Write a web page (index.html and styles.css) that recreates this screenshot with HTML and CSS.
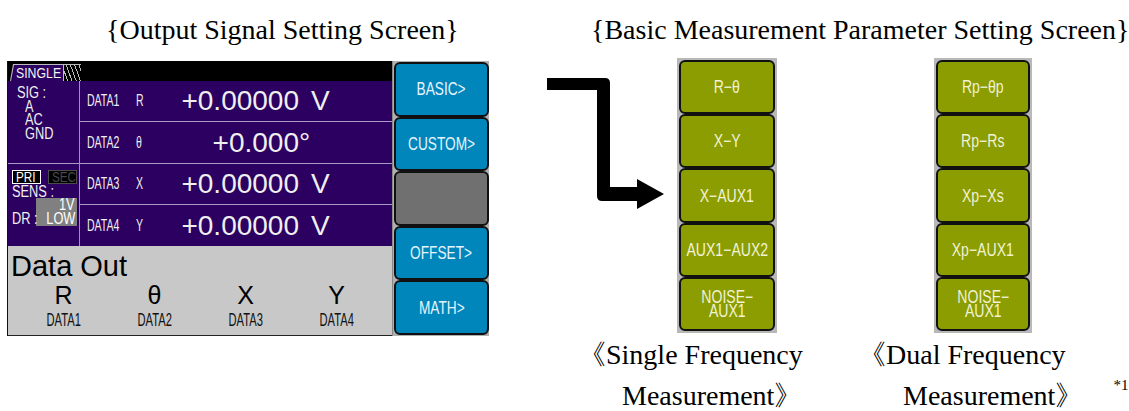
FILE: index.html
```html
<!DOCTYPE html>
<html lang="en">
<head>
    <meta charset="UTF-8">
    <meta name="viewport" content="width=device-width, initial-scale=1.0">
    <title>Output Signal Setting Screen</title>
    <link rel="stylesheet" href="styles.css">
</head>
<body>
<div class="page">
    <section class="fig fig-left">
        <h2>{Output Signal Setting Screen}</h2>
        <div class="screen">
            <div class="main">
                <div class="topbar">
                    <div class="tab"><span class="tab-label"><span class="t">SINGLE</span></span><i class="hatch"></i></div>
                </div>
                <div class="mid">
                    <div class="status">
                        <div class="sig">
                            <div><span class="t">SIG :</span></div>
                            <div class="ind"><span class="t">A</span></div>
                            <div class="ind"><span class="t">AC</span></div>
                            <div class="ind"><span class="t">GND</span></div>
                        </div>
                        <div class="sens">
                            <div class="prisec"><span class="pri"><span class="t">PRI</span></span><span class="sec"><span class="t">SEC</span></span></div>
                            <div><span class="t">SENS :</span></div>
                            <div class="box"><span class="t">1V</span></div>
                            <div class="dr"><span><span class="t">DR :</span></span><span class="box"><span class="t">LOW</span></span></div>
                        </div>
                    </div>
                    <div class="rows">
                        <div class="row"><span class="lbl"><span class="t">DATA1</span></span><span class="sym"><span class="t">R</span></span><span class="val">+0.00000</span><span class="unit">V</span></div>
                        <div class="row"><span class="lbl"><span class="t">DATA2</span></span><span class="sym"><span class="t">θ</span></span><span class="val">+0.000</span><span class="unit deg">°</span></div>
                        <div class="row"><span class="lbl"><span class="t">DATA3</span></span><span class="sym"><span class="t">X</span></span><span class="val">+0.00000</span><span class="unit">V</span></div>
                        <div class="row"><span class="lbl"><span class="t">DATA4</span></span><span class="sym"><span class="t">Y</span></span><span class="val">+0.00000</span><span class="unit">V</span></div>
                    </div>
                </div>
                <div class="out">
                    <div class="out-title">Data Out</div>
                    <div class="out-grid">
                        <div class="out-item"><b>R</b><span class="t">DATA1</span></div>
                        <div class="out-item"><b>θ</b><span class="t">DATA2</span></div>
                        <div class="out-item"><b>X</b><span class="t">DATA3</span></div>
                        <div class="out-item"><b>Y</b><span class="t">DATA4</span></div>
                    </div>
                </div>
            </div>
            <div class="keys">
                <div class="key"><span class="t">BASIC&gt;</span></div>
                <div class="key"><span class="t">CUSTOM&gt;</span></div>
                <div class="key blank"></div>
                <div class="key"><span class="t">OFFSET&gt;</span></div>
                <div class="key"><span class="t">MATH&gt;</span></div>
            </div>
        </div>
    </section>

    <section class="fig fig-right">
        <h2>{Basic Measurement Parameter Setting Screen}</h2>
        <div class="diagram">
            <svg class="arrow" width="118" height="133" viewBox="0 0 118 133">
                <path d="M0 0 H58 Q63 0 63 5 V109 H90 V101 L117 116 L90 131 V123 H55 Q50 123 50 118 V12 H0 Z" fill="#000"/>
            </svg>
            <div class="menu m1">
                <div class="item"><span class="t">R−θ</span></div>
                <div class="item"><span class="t">X−Y</span></div>
                <div class="item"><span class="t">X−AUX1</span></div>
                <div class="item"><span class="t">AUX1−AUX2</span></div>
                <div class="item"><span class="t">NOISE−<br>AUX1</span></div>
            </div>
            <div class="menu m2">
                <div class="item"><span class="t">Rp−θp</span></div>
                <div class="item"><span class="t">Rp−Rs</span></div>
                <div class="item"><span class="t">Xp−Xs</span></div>
                <div class="item"><span class="t">Xp−AUX1</span></div>
                <div class="item"><span class="t">NOISE−<br>AUX1</span></div>
            </div>
        </div>
        <div class="notes">
            <p class="note n1">《Single Frequency<span class="l2">Measurement》</span></p>
            <p class="note n2">《Dual Frequency<span class="l2">Measurement》<sup>*1</sup></span></p>
        </div>
    </section>
</div>
</body>
</html>
```

FILE: styles.css
```css
*{
    box-sizing: border-box;
}
body{
    margin: 0;
    background: #fff;
    color: #000;
    font-family: "Liberation Serif", serif;
}
.page{
    display: flex;
    width: 1129px;
    height: 411px;
    padding-left: 7px;
    overflow: hidden;
}
.fig h2{
    margin: 0;
    padding-top: 15px;
    font-size: 28px;
    font-weight: normal;
    line-height: 30px;
    white-space: nowrap;
}
/* the instrument uses a tall, narrow bitmap font */
.t{
    display: inline-block;
    white-space: nowrap;
    transform: scaleX(0.7);
    transform-origin: left center;
}
.screen, .menu{
    font-family: "Liberation Sans", Arial, sans-serif;
}

/* left: the instrument screen */
.fig-left{
    width: 482px;
}
.fig-left h2{
    padding-left: 99px;
}
.screen{
    display: flex;
    width: 482px;
    height: 275px;
    margin-top: 16px;
}
.main{
    width: 385px;
    display: flex;
    flex-direction: column;
    border-left: 1px solid #111;
}
.topbar{
    height: 20px;
    background: #000;
    display: flex;
    align-items: flex-end;
    padding-left: 2px;
}
.tab{
    display: flex;
    height: 17px;
    background: #bcbcbc;
    padding: 1px 0 0 1px;
    clip-path: polygon(3px 0, 100% 0, 100% 100%, 0 100%);
}
.tab-label{
    width: 52px;
    background: #2b0060;
    color: #f2f2f2;
    font-size: 15px;
    line-height: 16px;
    padding-left: 5px;
    clip-path: polygon(3px 0, 100% 0, 100% 100%, 0 100%);
}
.tab-label .t{
    transform: scaleX(0.82);
}
.hatch{
    width: 17px;
    margin-left: 1px;
    background: repeating-linear-gradient(70deg, #000 0 3px, #bcbcbc 3px 4px);
}
.mid{
    height: 165px;
    display: flex;
    background: #2b0060;
    color: #efefef;
}
.status{
    width: 72px;
    border-right: 1px solid #9c92b8;
    font-size: 16px;
}
.status .t{
    transform: scaleX(0.8);
}
.sig{
    height: 83px;
    border-bottom: 1px solid #a89cc4;
    padding: 5px 0 0 9px;
    line-height: 13.5px;
}
.sig .ind{
    padding-left: 8px;
}
.sens{
    padding: 6px 2px 0 4px;
    line-height: 13px;
}
.prisec{
    display: flex;
    gap: 7px;
    margin-bottom: 1px;
}
.pri, .sec{
    width: 29px;
    height: 14px;
    background: #000;
    padding-left: 3px;
    font-size: 15px;
    line-height: 12px;
}
.status .pri .t, .status .sec .t{
    transform: scaleX(0.78);
}
.pri{
    border: 1px solid #fff;
    color: #fff;
}
.sec{
    border: 1px solid #4c4c4c;
    color: #484848;
}
.box{
    width: 41px;
    height: 14px;
    margin-left: 24px;
    background: #808080;
    color: #fff;
    text-align: right;
    padding-right: 2px;
    line-height: 14px;
}
.box .t{
    transform-origin: right center;
}
.dr{
    display: flex;
}
.dr > span:first-child{
    width: 24px;
}
.dr .box{
    margin-left: 0;
}
.rows{
    flex: 1;
    display: flex;
    flex-direction: column;
}
.row{
    height: 41px;
    display: flex;
    align-items: center;
    padding-left: 7px;
    border-bottom: 1px solid #a89cc4;
}
.row:nth-child(2){
    height: 42px;
}
.row:last-child{
    border-bottom: none;
}
.lbl{
    width: 49px;
    font-size: 17px;
}
.sym{
    width: 20px;
    font-size: 17px;
}
.lbl .t, .sym .t{
    transform: scaleX(0.62);
}
.val{
    width: 143px;
    text-align: right;
    font-size: 28px;
}
.unit{
    margin-left: 12px;
    font-size: 28px;
}
.unit.deg{
    margin-left: 0;
}
.out{
    height: 90px;
    background: #c8c8c8;
    border-bottom: 1px solid #222;
}
.out-title{
    padding: 5px 0 0 3px;
    font-size: 29px;
    line-height: 30px;
}
.out-grid{
    display: grid;
    grid-template-columns: repeat(4, 91px);
    margin-left: 10px;
}
.out-item{
    display: flex;
    flex-direction: column;
    align-items: center;
}
.out-item b{
    font-weight: normal;
    font-size: 25px;
    line-height: 24px;
    margin-top: 2px;
}
.out-item .t{
    margin-top: 5px;
    font-size: 18px;
    line-height: 16px;
    color: #111;
    transform: scaleX(0.62);
    transform-origin: center;
}
.keys{
    width: 97px;
    display: flex;
    flex-direction: column;
    background: #b0b0b0;
    border-left: 1px solid #888;
    padding: 1px 0 1px 1px;
}
.key{
    flex: 1;
    display: flex;
    align-items: center;
    justify-content: center;
    background: #0086ba;
    border: 2px solid #101010;
    border-radius: 6px;
    color: #e6f4ff;
    font-size: 19px;
}
.key .t{
    transform: scaleX(0.72);
    transform-origin: center;
}
.key.blank{
    background: #707070;
}

/* right: menus and notes */
.fig-right{
    margin-left: 58px;
}
.fig-right h2{
    padding-left: 44px;
}
.diagram{
    display: flex;
    align-items: flex-start;
    margin-top: 13px;
}
.arrow{
    margin-top: 20px;
}
.menu{
    width: 100px;
    height: 275px;
    display: flex;
    flex-direction: column;
    background: #b8b8b8;
    padding: 2px;
}
.m1{
    margin-left: 12px;
}
.m2{
    width: 98px;
    margin-left: 157px;
}
.item{
    flex: 1;
    display: flex;
    align-items: center;
    justify-content: center;
    text-align: center;
    background: #8b9d00;
    border: 2px solid #111;
    border-radius: 6px;
    color: #f2f2d6;
    font-size: 18px;
    line-height: 14px;
}
.item .t{
    transform: scaleX(0.78);
    transform-origin: center;
}
.notes{
    display: flex;
}
.note{
    margin: 0;
    font-size: 28px;
    line-height: 43px;
    white-space: nowrap;
}
.note .l2{
    display: block;
    margin-top: 7px;
    padding-left: 44px;
    line-height: 26px;
}
.n1{
    width: 280px;
    margin-left: 31px;
}
.n2 .l2{
    padding-left: 45px;
}
.note sup{
    font-size: 15px;
    margin-left: 30px;
    vertical-align: 15px;
    line-height: 0;
}
```
